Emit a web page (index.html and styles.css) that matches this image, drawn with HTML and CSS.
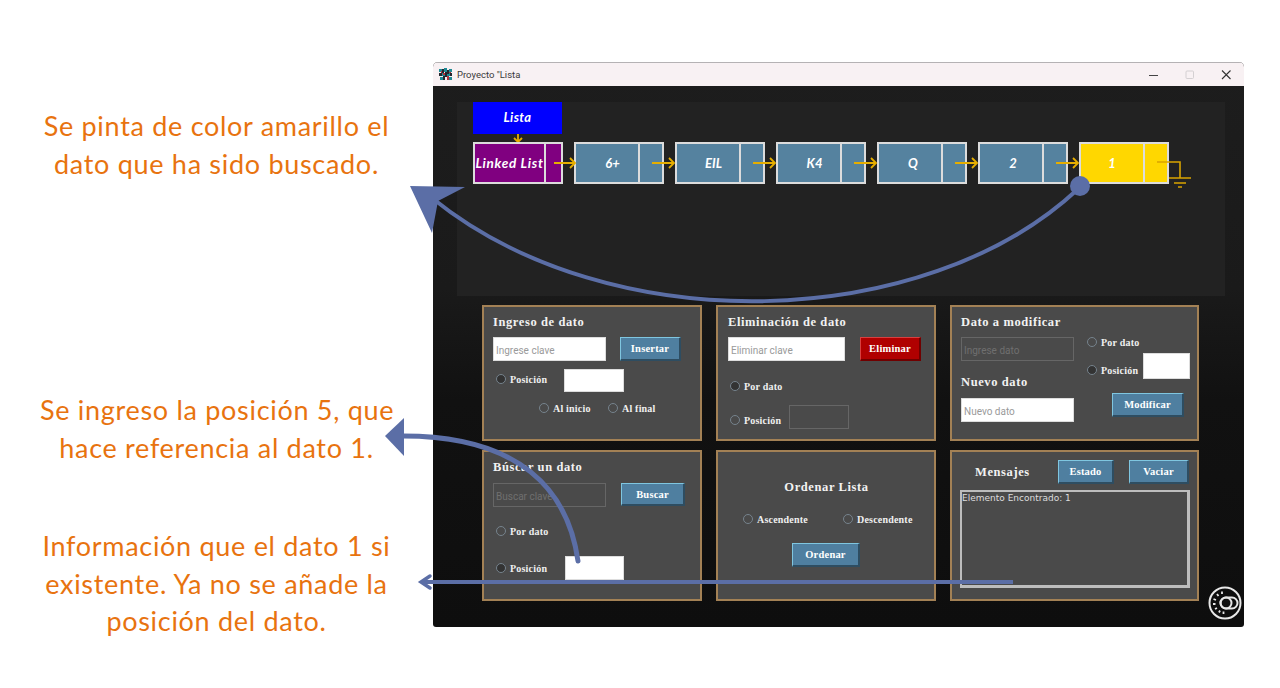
FILE: index.html
```html
<!DOCTYPE html>
<html lang="es">
<head>
<meta charset="utf-8">
<title>Proyecto "Lista</title>
<link rel="stylesheet" href="styles.css">
</head>
<body>
<div class="stage">
  <aside class="notes">
    <p class="note note-a">Se pinta de color amarillo el<br>dato que ha sido buscado.</p>
    <p class="note note-b">Se ingreso la posición 5, que<br>hace referencia al dato 1.</p>
    <p class="note note-c">Información que el dato 1 si<br>existente. Ya no se añade la<br>posición del dato.</p>
  </aside>

  <main class="window">
    <header class="titlebar">
      <svg class="app-icon" width="13" height="13" viewBox="0 0 13 13">
        <rect width="13" height="13" fill="#f7f0f2"/>
        <path d="M0 1h3v3H0zM5 0h3v4H5zM10 1h3v3h-3zM3 5h3v3H3zM8 5h3v3H8zM1 9h3v3H1zM10 9h3v3h-3z" fill="#1f8a94"/>
        <path d="M3 1h2v4H3zM8 2h2v4H8zM0 5h3v3H0zM6 4h2v5H6zM11 5h2v3h-2zM4 8h2v4H4z" fill="#23262e"/>
        <path d="M4 5h2v2H4zM8 8h2v4H8zM2 3h1v2H2zM10 4h2v1h-2z" fill="#b3303a"/>
      </svg>
      <span class="win-title">Proyecto "Lista</span>
      <div class="win-controls">
        <svg width="96" height="12" viewBox="0 0 96 12">
          <path d="M1 6.500h9" stroke="#444" stroke-width="1.200"/>
          <rect x="38" y="2" width="7.500" height="7.500" rx="1" fill="none" stroke="#d4d0d2"/>
          <path d="M74 1.500l8.500 8.500M82.500 1.500L74 10" stroke="#333" stroke-width="1.100" fill="none"/>
        </svg>
      </div>
    </header>

    <section class="canvas">
      <div class="head-label">Lista
        <svg class="down-arrow" width="12" height="9" viewBox="0 0 12 9"><path d="M6 0v8M2 4l4 4 4-4" fill="none" stroke="#e6ae00" stroke-width="1.800"/></svg>
      </div>
      <div class="nodes">
        <div class="node node-head"><span class="cell">Linked List</span><span class="next"></span>
          <svg class="link link-head" width="23" height="12" viewBox="0 0 23 12"><path d="M0 6h21M16 1l5 5-5 5" fill="none" stroke="#e6ae00" stroke-width="1.800"/></svg>
        </div>
        <div class="node"><span class="cell shift-a">6+</span><span class="next"></span>
          <svg class="link" width="24" height="12" viewBox="0 0 24 12"><path d="M0 6h22M17 1l5 5-5 5" fill="none" stroke="#e6ae00" stroke-width="1.800"/></svg>
        </div>
        <div class="node"><span class="cell shift-a">EIL</span><span class="next"></span>
          <svg class="link" width="24" height="12" viewBox="0 0 24 12"><path d="M0 6h22M17 1l5 5-5 5" fill="none" stroke="#e6ae00" stroke-width="1.800"/></svg>
        </div>
        <div class="node"><span class="cell shift-a">K4</span><span class="next"></span>
          <svg class="link" width="24" height="12" viewBox="0 0 24 12"><path d="M0 6h22M17 1l5 5-5 5" fill="none" stroke="#e6ae00" stroke-width="1.800"/></svg>
        </div>
        <div class="node"><span class="cell shift-b">Q</span><span class="next"></span>
          <svg class="link" width="24" height="12" viewBox="0 0 24 12"><path d="M0 6h22M17 1l5 5-5 5" fill="none" stroke="#e6ae00" stroke-width="1.800"/></svg>
        </div>
        <div class="node"><span class="cell shift-c">2</span><span class="next"></span>
          <svg class="link" width="24" height="12" viewBox="0 0 24 12"><path d="M0 6h22M17 1l5 5-5 5" fill="none" stroke="#e6ae00" stroke-width="1.800"/></svg>
        </div>
        <div class="node node-found"><span class="cell">1</span><span class="next"></span>
          <svg class="ground" width="36" height="30" viewBox="0 0 36 30"><path d="M0 1h23v16M12 17h22M17 22h12M21 26h4" fill="none" stroke="#d9a400" stroke-width="1.600"/></svg>
        </div>
      </div>
    </section>

    <section class="panels">
      <div class="panel">
        <h2 class="title">Ingreso de dato</h2>
        <div class="row">
          <input class="field w113" placeholder="Ingrese clave">
          <button class="btn btn-insert">Insertar</button>
        </div>
        <div class="row row-pos">
          <label class="opt w68 lift"><input class="radio on" type="radio">Posición</label>
          <input class="field small">
        </div>
        <div class="row row-ends">
          <label class="opt w69"><input class="radio" type="radio">Al inicio</label>
          <label class="opt"><input class="radio" type="radio">Al final</label>
        </div>
      </div>

      <div class="panel panel-del">
        <h2 class="title">Eliminación de dato</h2>
        <div class="row">
          <input class="field w117" placeholder="Eliminar clave">
          <button class="btn btn-del">Eliminar</button>
        </div>
        <div class="row row-r1"><label class="opt"><input class="radio on" type="radio">Por dato</label></div>
        <div class="row row-r2">
          <label class="opt w59 nudge"><input class="radio" type="radio">Posición</label>
          <input class="field small off">
        </div>
      </div>

      <div class="panel panel-mod">
        <div class="mod-left">
          <h2 class="title">Dato a modificar</h2>
          <input class="field w113 off" placeholder="Ingrese dato">
          <h2 class="title title-new">Nuevo dato</h2>
          <input class="field w113" placeholder="Nuevo dato">
        </div>
        <div class="mod-right">
          <label class="opt"><input class="radio" type="radio">Por dato</label>
          <div class="row mod-pos">
            <label class="opt w56 drop"><input class="radio on" type="radio">Posición</label>
            <input class="field mod-field">
          </div>
          <button class="btn btn-mod">Modificar</button>
        </div>
      </div>

      <div class="panel">
        <h2 class="title">Búscar un dato</h2>
        <div class="row row-find">
          <input class="field w113 off" placeholder="Buscar clave">
          <button class="btn btn-find">Buscar</button>
        </div>
        <div class="row row-f1"><label class="opt"><input class="radio" type="radio">Por dato</label></div>
        <div class="row row-f2">
          <label class="opt w69"><input class="radio on" type="radio">Posición</label>
          <input class="field find-field">
        </div>
      </div>

      <div class="panel panel-sort">
        <h2 class="title">Ordenar Lista</h2>
        <div class="sort-opts">
          <label class="opt w100"><input class="radio" type="radio">Ascendente</label>
          <label class="opt"><input class="radio" type="radio">Descendente</label>
        </div>
        <button class="btn btn-sort">Ordenar</button>
      </div>

      <div class="panel panel-msg">
        <div class="msg-head">
          <h2 class="title msg-title">Mensajes</h2>
          <button class="btn btn-state">Estado</button>
          <button class="btn btn-empty">Vaciar</button>
        </div>
        <div class="msg-box">Elemento Encontrado: 1</div>
      </div>
    </section>

    <svg class="theme-icon" width="36" height="36" viewBox="0 0 36 36">
      <circle cx="18" cy="18" r="15.500" fill="none" stroke="#e8e8e8" stroke-width="2"/>
      <rect x="13.500" y="12.500" width="17" height="11" rx="5.500" fill="none" stroke="#e8e8e8" stroke-width="2"/>
      <circle cx="19" cy="18" r="5.500" fill="none" stroke="#e8e8e8" stroke-width="2"/>
      <path d="M15 6.500v2.500M10 9l1.500 2M6.500 14l2.500 1M6 19h2.500M8 24l2-1M12 27.500l1-2M16.500 29v-2.500" stroke="#e8e8e8" stroke-width="1.800" fill="none"/>
    </svg>
  </main>

  <svg class="overlay" width="1280" height="688" viewBox="0 0 1280 688">
    <g fill="none" stroke="#5b6ea6">
      <path d="M1078 189C925 332 610 342 432 198" stroke-width="4"/>
      <path d="M578 561C568 490 520 436 403 436" stroke-width="5" stroke-linecap="round"/>
      <path d="M1013 582H421" stroke-width="4"/>
      <path d="M430 576l-9 6 9 6" stroke-width="3.500" stroke-linecap="round"/>
    </g>
    <g fill="#5b6ea6">
      <circle cx="1080" cy="186" r="10"/>
      <path d="M410 186L465 187 438 201 432 233z"/>
      <path d="M385 436L404 418V456z"/>
    </g>
  </svg>
</div>
</body>
</html>
```

FILE: styles.css
```css
* { box-sizing: border-box; }
html, body { margin: 0; height: 100%; background: #fff; overflow: hidden; }

.stage { position: relative; display: flex; width: 1280px; height: 688px; }

/* annotations */
.notes { width: 433px; flex: none; padding-left: 40px; padding-right: 40px; }
.note {
  margin: 0; text-align: center; font-family: "Lato", sans-serif; font-size: 27px;
  line-height: 37.500px; color: #e8730f; letter-spacing: .7px; white-space: nowrap;
}
.note-a { margin-top: 107px; }
.note-b { margin-top: 209px; }
.note-c { margin-top: 61px; }

/* window */
.window {
  position: relative; width: 811px; height: 565px; margin-top: 62px; flex: none;
  background: linear-gradient(#1d1d1d 0, #1a1a1a 40%, #111 60%, #0e0e0e 100%);
  border-radius: 5px 5px 3px 3px; overflow: hidden;
}
.titlebar {
  display: flex; align-items: center; height: 24px; padding-left: 6px;
  background: #f8f1f3; border-top: 1px solid #b5b2b4;
}
.win-title { margin-left: 5px; font: 9.500px "Roboto", sans-serif; color: #3a3a3a; }
.win-controls { margin-left: auto; margin-right: 0; display: flex; }

/* diagram */
.canvas { margin: 16px 19px 0 24px; height: 194px; background: #222; padding-left: 16px; }
.head-label {
  position: relative; width: 89px; height: 32px; background: #00f; color: #fff;
  display: flex; align-items: center; justify-content: center; padding-bottom: 2px;
  font: italic 700 13px "Lato", sans-serif; letter-spacing: .4px;
}
.down-arrow { position: absolute; left: 39px; top: 32px; }
.nodes { display: flex; gap: 11px; margin-top: 8px; }
.node {
  position: relative; display: flex; width: 90px; height: 42px;
  background: #55829f; border: 2px solid #dcdcdc; color: #fff;
  font: italic 700 13px "Lato", sans-serif;
}
.cell { width: 64px; display: flex; align-items: center; justify-content: center; border-right: 2px solid #dcdcdc; }
.shift-a { padding-left: 11px; }
.shift-b { padding-left: 6px; }
.shift-c { padding-left: 4px; }
.next { flex: 1; }
.node-head { background: #800080; }
.node-head .cell { width: 71px; font-size: 13.500px; letter-spacing: .7px; white-space: nowrap; }
.node-found { background: #ffd700; }
.link { position: absolute; left: 76px; top: 13px; z-index: 1; }
.link-head { left: 79px; }
.ground { position: absolute; left: 76px; top: 17px; }

/* panels */
.panels {
  display: grid; grid-template-columns: 220px 220px 249px; grid-template-rows: 136px 151px;
  gap: 9px 14px; margin: 9px 0 0 49px;
}
.panel { padding: 8px 9px 0; background: #4a4a4a; border: 2px solid #a38155; }
.title {
  margin: 0 0 8px; height: 14px; color: #f2f2f2;
  font: 700 12.500px/14px "Liberation Serif", serif; letter-spacing: .6px;
}
.row { display: flex; align-items: center; }
.field {
  display: block; height: 24px; padding: 2px 2px 0; background: #fff; border: 1px solid #ddd;
  font: 10px "Roboto", sans-serif; color: #333; outline: 0; border-radius: 0;
}
.field::placeholder { color: #9a9a9a; }
.field.off { background: transparent; border: 1.500px solid #666; }
.field.off::placeholder { color: #6f6f6f; }
.w113 { width: 113px; }
.w117 { width: 117px; }
.small { width: 60px; }
.opt {
  display: flex; align-items: center; gap: 4px; height: 12px; white-space: nowrap;
  font: 700 10px "Liberation Serif", serif; color: #f0f0f0; letter-spacing: .2px;
}
.w56 { width: 56px; } .w59 { width: 59px; } .w68 { width: 68px; } .w69 { width: 69px; } .w100 { width: 100px; }
.lift { margin-top: -3px; }
.nudge { margin-top: 6px; }
.radio {
  appearance: none; width: 10px; height: 10px; margin: 0; flex: none; border-radius: 50%;
  border: 1px solid #76838d; background: transparent;
}
.radio.on { background: #333; }
.btn {
  display: block; height: 24px; padding: 0; background: #4f7fa0; color: #fff;
  border: 1px solid; border-color: #7fc6e0 #2e4d61 #2e4d61 #7fc6e0; border-width: 1px 2px 2px 1px;
  font: 700 10.500px "Liberation Serif", serif; letter-spacing: .2px;
}

/* panel 1 */
.btn-insert { width: 61px; margin-left: 14px; }
.row-pos { margin-top: 8px; height: 23px; padding-left: 3px; }
.row-ends { margin-top: 10px; padding-left: 46px; }
.small { height: 23px; }

/* panel 2 */
.panel-del { padding-left: 10px; }
.btn-del {
  width: 61px; margin-left: 15px; background: #b00000;
  border-color: #d84040 #700000 #700000 #d84040;
}
.row-r1 { margin-top: 19px; padding-left: 2px; }
.row-r2 { margin-top: 13px; height: 24px; padding-left: 2px; }
.row-r2 .small { height: 24px; }

/* panel 3 */
.panel-mod { display: flex; }
.mod-left { width: 113px; flex: none; }
.title-new { margin: 14px 0 9px; }
.mod-right { margin: 21px 0 0 13px; }
.mod-pos { margin-top: 5px; height: 26px; }
.drop { margin-top: 8px; }
.mod-field { width: 47px; height: 26px; }
.btn-mod { width: 72px; margin: 14px 0 0 25px; }

/* panel 4 */
.row-find { margin-top: 9px; }
.btn-find { width: 64px; height: 23px; margin-left: 15px; align-self: flex-start; }
.row-f1 { margin-top: 18px; padding-left: 3px; }
.row-f2 { margin-top: 19px; height: 24px; padding-left: 3px; }
.find-field { width: 59px; height: 24px; }

/* panel 5 */
.panel-sort { padding: 28px 0 0; display: flex; flex-direction: column; }
.panel-sort .title { text-align: center; margin-left: 1px; }
.sort-opts { display: flex; margin-top: 11px; padding-left: 25px; }
.btn-sort { width: 68px; margin: 18px 0 0 74px; }

/* panel 6 */
.panel-msg { padding: 8px 0 0 8px; }
.msg-head { display: flex; align-items: center; padding-left: 15px; }
.msg-title { width: 83px; margin: 0; }
.btn-state { width: 56px; }
.btn-empty { width: 60px; margin-left: 15px; }
.msg-box {
  width: 230px; height: 98px; margin-top: 6px; background: #4a4a4a;
  border: 2px solid #bdbdbd; border-right-width: 3px; border-bottom-width: 3px;
  font: 9px/12px "DejaVu Sans", sans-serif; color: #ddd;
}

/* overlays */
.theme-icon { position: absolute; right: 1px; bottom: 6px; }
.overlay { position: absolute; left: 0; top: 0; pointer-events: none; }
```
